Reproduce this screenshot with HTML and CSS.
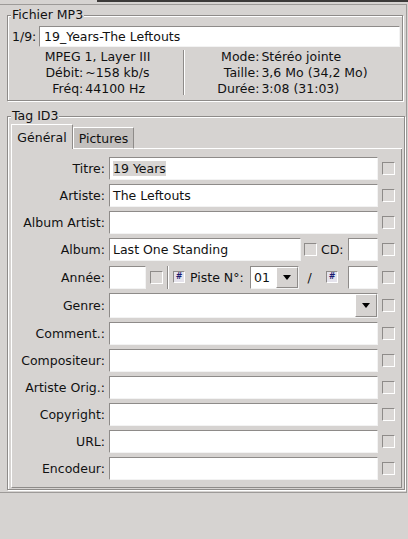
FILE: index.html
```html
<!DOCTYPE html>
<html lang="fr">
<head>
<meta charset="utf-8">
<title>Tag MP3</title>
<link rel="stylesheet" href="styles.css">
</head>
<body>
<div class="topline"></div>
<div class="panel">
  <fieldset class="group group-file">
    <legend class="group-title title-file">Fichier MP3</legend>
    <div class="file-row">
      <span class="file-count">1/9:</span>
      <div class="field file-name">19_Years-The Leftouts</div>
    </div>
    <div class="info">
      <div class="info-block info-left">
        <div class="info-grid">
          <div class="info-span">MPEG 1, Layer III</div>
          <div class="info-label">Débit:</div><div>~158 kb/s</div>
          <div class="info-label">Fréq:</div><div>44100 Hz</div>
        </div>
      </div>
      <div class="vsep"></div>
      <div class="info-block info-right">
        <div class="info-grid info-grid-right">
          <div class="info-label">Mode:</div><div>Stéréo jointe</div>
          <div class="info-label">Taille:</div><div>3,6 Mo (34,2 Mo)</div>
          <div class="info-label">Durée:</div><div>3:08 (31:03)</div>
        </div>
      </div>
    </div>
  </fieldset>

  <fieldset class="group group-tag">
    <legend class="group-title">Tag ID3</legend>
    <div class="tabs">
      <div class="tab tab-active">Général</div>
      <div class="tab">Pictures</div>
      <div class="tab-fill"></div>
    </div>
    <div class="pane">
      <div class="lbl">Titre:</div>
      <div class="field"><span class="sel">19 Years</span></div>
      <div class="cb"></div>

      <div class="lbl">Artiste:</div>
      <div class="field">The Leftouts</div>
      <div class="cb"></div>

      <div class="lbl">Album Artist:</div>
      <div class="field"></div>
      <div class="cb"></div>

      <div class="lbl">Album:</div>
      <div class="field-row">
        <div class="field w-album">Last One Standing</div>
        <div class="cb cb-album"></div>
        <span class="cd-label">CD:</span>
        <div class="field field-fill field-cd"></div>
      </div>
      <div class="cb"></div>

      <div class="lbl">Année:</div>
      <div class="field-row">
        <div class="field w-year"></div>
        <div class="cb cb-year"></div>
        <div class="vsep vsep-row"></div>
        <div class="hash hash-first">#</div>
        <span class="piste-label">Piste N°:</span>
        <div class="combo combo-track">
          <div class="combo-text">01</div>
          <div class="combo-btn"><svg width="8" height="5" viewBox="0 0 8 5"><polygon points="0,0 8,0 4,5" fill="#000"/></svg></div>
        </div>
        <span class="slash">/</span>
        <div class="hash hash-second">#</div>
        <div class="field field-fill field-total"></div>
      </div>
      <div class="cb"></div>

      <div class="lbl">Genre:</div>
      <div class="combo combo-genre">
        <div class="combo-text"></div>
        <div class="combo-btn"><svg width="8" height="5" viewBox="0 0 8 5"><polygon points="0,0 8,0 4,5" fill="#000"/></svg></div>
      </div>
      <div class="cb"></div>

      <div class="lbl">Comment.:</div>
      <div class="field"></div>
      <div class="cb"></div>

      <div class="lbl">Compositeur:</div>
      <div class="field"></div>
      <div class="cb"></div>

      <div class="lbl">Artiste Orig.:</div>
      <div class="field"></div>
      <div class="cb"></div>

      <div class="lbl">Copyright:</div>
      <div class="field"></div>
      <div class="cb"></div>

      <div class="lbl">URL:</div>
      <div class="field"></div>
      <div class="cb"></div>

      <div class="lbl">Encodeur:</div>
      <div class="field"></div>
      <div class="cb"></div>
    </div>
  </fieldset>
</div>
</body>
</html>
```

FILE: styles.css
```css
html, body {
  margin: 0;
  padding: 0;
}
body {
  background: #d6d3d1;
  font-family: "DejaVu Sans", "Liberation Sans", sans-serif;
  font-size: 12.5px;
  color: #111;
  width: 408px;
  height: 539px;
  overflow: hidden;
}

.topline {
  height: 2px;
  margin-left: 97px;
  background: #3c3a39;
}

.panel {
  margin-top: 2px;
  width: 406px;
  border-top: 1px solid #9d9a98;
  border-right: 1px solid #9d9a98;
  border-bottom: 1px solid #9d9a98;
  padding-bottom: 2px;
}

.group {
  border: 1px solid #8e8b89;
  box-shadow: inset 1px 1px 0 #fff, 1px 1px 0 #fff;
  min-inline-size: 0;
}
.group-file {
  margin: 3px 3px 0 7px;
  padding: 4px 2px 3px 4px;
}
.group-tag {
  margin: 8px 1px 0 7px;
  padding: 1px 2px 1px 3px;
}
.group-title {
  padding: 0 1px;
  line-height: 14px;
  background: #d6d3d1;
}
.title-file {
  margin-left: -1px;
}

/* Fichier MP3 */
.file-row {
  display: flex;
  align-items: center;
  height: 21px;
}
.file-count {
  width: 27px;
  white-space: nowrap;
}
.field {
  box-sizing: border-box;
  background: #fff;
  border: 1px solid;
  border-color: #8e8b89 #f3f3f3 #f3f3f3 #8e8b89;
  display: flex;
  align-items: center;
  padding-left: 3px;
  white-space: nowrap;
  overflow: hidden;
}
.file-name {
  flex: 1;
  height: 21px;
  padding-left: 4px;
}

.info {
  display: flex;
  margin-top: 2px;
  height: 48px;
  line-height: 16px;
}
.info-block {
  display: flex;
  justify-content: center;
}
.info-left {
  width: 171px;
}
.info-right {
  flex: 1;
}
.vsep {
  width: 0;
  border-left: 1px solid #8e8b89;
  border-right: 1px solid #fff;
  margin: 1px 0 2px;
}
.info-grid {
  display: grid;
  grid-template-columns: auto auto;
  column-gap: 2px;
  align-content: start;
  white-space: nowrap;
}
.info-grid-right {
  column-gap: 2px;
}
.info-label {
  text-align: right;
}
.info-span {
  grid-column: 1 / span 2;
  text-align: center;
}

/* Tabs */
.tabs {
  display: flex;
  align-items: flex-end;
  height: 25px;
}
.tab {
  box-sizing: border-box;
  width: 61px;
  height: 22px;
  background: #c3c0be;
  border-top: 1px solid #fff;
  border-left: 1px solid #fff;
  border-right: 1px solid #8e8b89;
  border-bottom: 1px solid #fff;
  display: flex;
  align-items: center;
  justify-content: center;
  border-top-left-radius: 1px;
  border-top-right-radius: 1px;
}
.tab-active {
  width: 62px;
  height: 25px;
  background: #d6d3d1;
  border-bottom: none;
}
.tab-fill {
  flex: 1;
  border-bottom: 1px solid #fff;
}

.pane {
  border-left: 1px solid #fff;
  border-right: 1px solid #8e8b89;
  border-bottom: 1px solid #8e8b89;
  padding: 8px 6px 7px 0;
  display: grid;
  grid-template-columns: 93px 269px 13px;
  grid-template-rows: repeat(4, 23px) 24px 25px repeat(6, 23px);
  column-gap: 4px;
  row-gap: 4px;
}
.lbl {
  display: flex;
  align-items: center;
  justify-content: flex-end;
  white-space: nowrap;
}
.cb {
  box-sizing: border-box;
  width: 13px;
  height: 13px;
  border: 1px solid;
  border-color: #8e8b89 #fff #fff #8e8b89;
  background: #dbd8d6;
  align-self: center;
  flex: none;
}
.sel {
  background: #d8d5d3;
}

.field-row {
  display: flex;
  align-items: center;
}
.field-row .field {
  height: 23px;
}
.field-fill {
  flex: 1;
}
.w-album {
  width: 192px;
  flex: none;
}
.cb-album {
  margin-left: 3px;
}
.cd-label {
  margin-left: 4px;
  width: 23px;
  white-space: nowrap;
}
.field-cd {
  margin-left: 4px;
}

.w-year {
  width: 37px;
  flex: none;
}
.cb-year {
  margin-left: 4px;
}
.vsep-row {
  margin: 0 0 0 4px;
  height: 23px;
}
.hash {
  box-sizing: border-box;
  width: 12px;
  height: 12px;
  border: 1px solid;
  border-color: #8e8b89 #fff #fff #8e8b89;
  background: #e5e3ec;
  color: #1b1a70;
  font-size: 8px;
  font-weight: bold;
  line-height: 10px;
  text-align: center;
  flex: none;
}
.hash-first {
  margin-left: 4px;
}
.piste-label {
  margin-left: 5px;
  width: 57px;
  white-space: nowrap;
  flex: none;
}
.slash {
  margin-left: 8px;
  width: 5px;
  text-align: center;
  flex: none;
}
.hash-second {
  margin-left: 14px;
}
.field-total {
  margin-left: 10px;
}

.combo {
  box-sizing: border-box;
  display: flex;
  border: 1px solid;
  border-color: #8e8b89 #f3f3f3 #f3f3f3 #8e8b89;
  background: #fff;
}
.combo-track {
  margin-left: 3px;
  width: 49px;
  height: 23px;
  flex: none;
}
.combo-text {
  flex: 1;
  display: flex;
  align-items: center;
  padding-left: 3px;
}
.combo-btn {
  box-sizing: border-box;
  width: 22px;
  background: #d6d3d1;
  border: 1px solid;
  border-color: #fff #8e8b89 #8e8b89 #fff;
  display: flex;
  align-items: center;
  justify-content: center;
}
```
